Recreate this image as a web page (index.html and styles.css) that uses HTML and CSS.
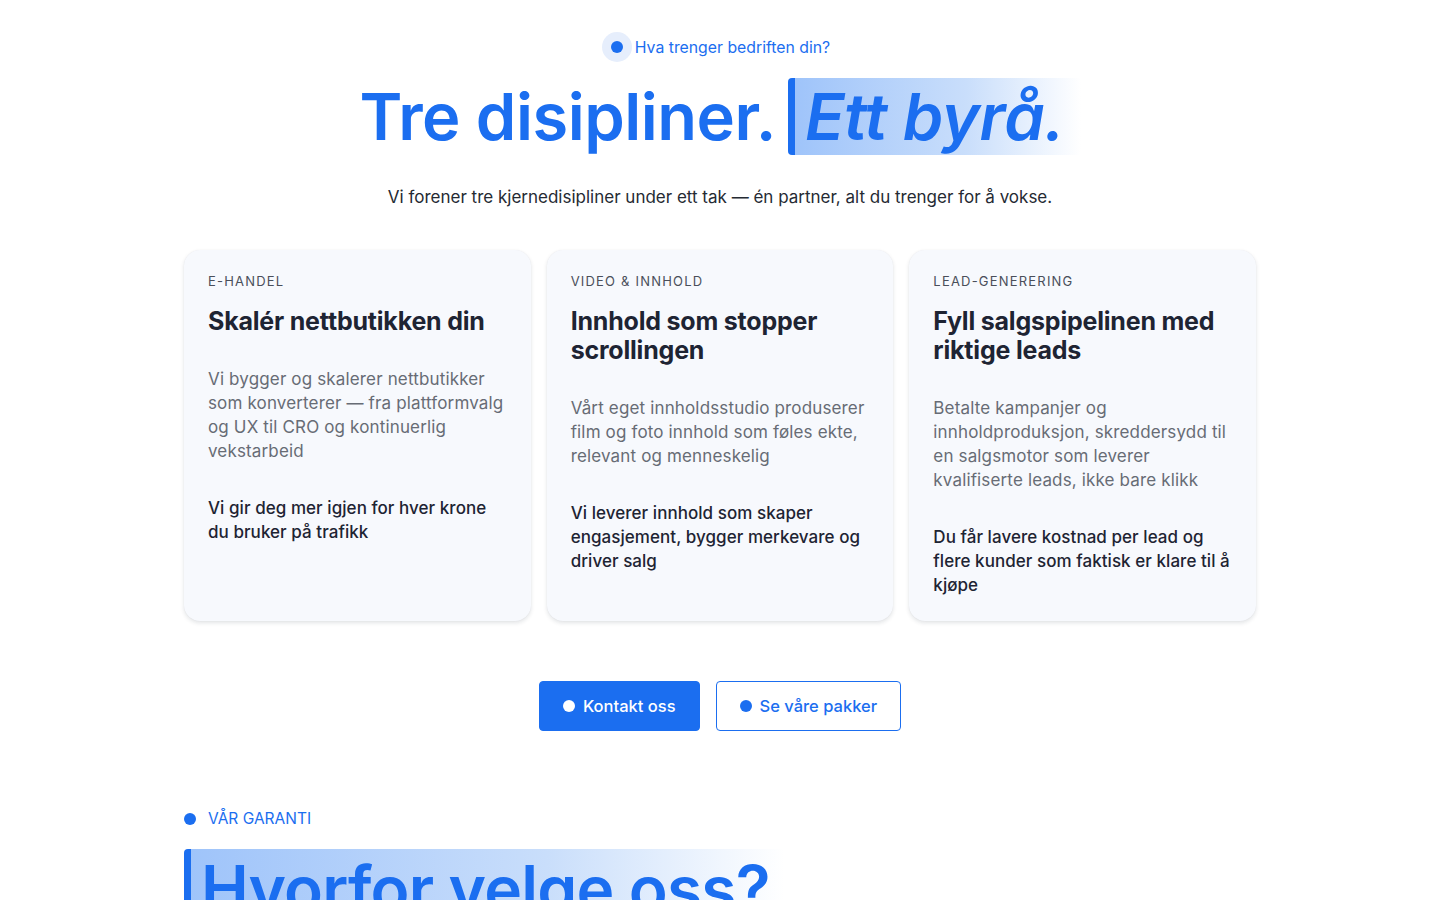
FILE: index.html
```html
<!DOCTYPE html>
<html lang="no">
<head>
<meta charset="utf-8">
<title>Tre disipliner. Ett byrå.</title>
<link rel="stylesheet" href="styles.css">
</head>
<body>
<main class="page">
  <section class="hero">
    <div class="eyebrow"><span class="halo"><span class="dot"></span></span><span class="eyebrow-text">Hva trenger bedriften din?</span></div>
    <h1 class="title">Tre disipliner. <span class="mark"><em>Ett byrå.</em></span></h1>
    <p class="lead">Vi forener tre kjernedisipliner under ett tak — én partner, alt du trenger for å vokse.</p>
    <div class="cards">
      <article class="card">
        <div class="card-label">E-HANDEL</div>
        <h2 class="card-title">Skalér nettbutikken din</h2>
        <p class="card-desc">Vi bygger og skalerer nettbutikker som konverterer — fra plattformvalg og UX til CRO og kontinuerlig vekstarbeid</p>
        <p class="card-strong">Vi gir deg mer igjen for hver krone du bruker på trafikk</p>
      </article>
      <article class="card">
        <div class="card-label">VIDEO &amp; INNHOLD</div>
        <h2 class="card-title">Innhold som stopper scrollingen</h2>
        <p class="card-desc">Vårt eget innholdsstudio produserer film og foto innhold som føles ekte, relevant og menneskelig</p>
        <p class="card-strong">Vi leverer innhold som skaper engasjement, bygger merkevare og driver salg</p>
      </article>
      <article class="card">
        <div class="card-label">LEAD-GENERERING</div>
        <h2 class="card-title">Fyll salgspipelinen med riktige leads</h2>
        <p class="card-desc">Betalte kampanjer og innholdproduksjon, skreddersydd til en salgsmotor som leverer kvalifiserte leads, ikke bare klikk</p>
        <p class="card-strong">Du får lavere kostnad per lead og flere kunder som faktisk er klare til å kjøpe</p>
      </article>
    </div>
    <div class="actions">
      <a class="btn btn-primary" href="#"><span class="btn-dot"></span>Kontakt oss</a>
      <a class="btn btn-outline" href="#"><span class="btn-dot"></span>Se våre pakker</a>
    </div>
  </section>
  <section class="guarantee">
    <div class="g-eyebrow"><span class="g-dot"></span>VÅR GARANTI</div>
    <h2 class="g-title"><span class="g-mark">Hvorfor velge oss?</span></h2>
  </section>
</main>
</body>
</html>
```
FILE: styles.css
```css
* { box-sizing: border-box; }
html, body { margin: 0; padding: 0; background: #ffffff; }
body {
  font-family: Inter, "Noto Sans", sans-serif;
  color: #1e2433;
  height: 900px;
  overflow: hidden;
}
.page { width: 1072px; margin: 0 auto; }
.hero { display: flex; flex-direction: column; align-items: center; padding-top: 32px; }
.eyebrow { display: flex; align-items: center; gap: 3px; height: 30px; margin-right: 8px; }
.halo {
  width: 30px; height: 30px; border-radius: 50%;
  background: #e6eefc;
  display: flex; align-items: center; justify-content: center;
}
.dot { width: 12px; height: 12px; border-radius: 50%; background: #1b6ef0; }
.eyebrow-text { font-size: 15.8px; color: #1b6ef0; letter-spacing: 0; }
.title {
  margin: 16px 0 0;
  font-size: 65px; font-weight: 600; line-height: 77px;
  color: #1b6ef0; letter-spacing: -0.5px;
  display: flex; align-items: center; gap: 12px;
}
.mark {
  display: inline-block;
  border-left: 7px solid #1b6ef0;
  border-radius: 4px;
  background: linear-gradient(90deg, #9fc4fa 0%, #c9defb 60%, rgba(255,255,255,0) 100%);
  padding: 0 16px 0 10px;
}
.mark em { font-style: italic; }
.lead { margin: 30px 0 0; font-size: 17px; color: #252a33; line-height: 24px; }
.cards {
  margin-top: 41px;
  width: 100%;
  display: grid; grid-template-columns: repeat(3, 1fr); gap: 16px;
}
.card {
  background: #f7f9fd;
  border-radius: 16px;
  padding: 23px 24px 24px;
  min-height: 371px;
  box-shadow: 0 2px 4px rgba(20, 30, 50, 0.12), 0 0 1px rgba(20,30,50,0.08);
}
.card-label { font-size: 13px; letter-spacing: 1.2px; color: #4a4f5a; line-height: 16px; }
.card-title { margin: 18px 0 0; font-size: 25px; font-weight: 700; line-height: 29px; color: #1e2433; letter-spacing: -0.2px; }
.card-desc { margin: 31px 0 0; font-size: 17px; line-height: 24px; color: #676c75; letter-spacing: 0.15px; }
.card-strong { margin: 33px 0 0; font-size: 17px; line-height: 24px; color: #1e2433; font-weight: 500; letter-spacing: 0.05px; }
.actions { display: flex; gap: 16px; margin-top: 60px; }
.btn {
  display: flex; align-items: center; gap: 8px;
  height: 50px; padding: 0 23px;
  border-radius: 4px; font-size: 16.5px; font-weight: 500; text-decoration: none;
}
.btn-dot { width: 12px; height: 12px; border-radius: 50%; }
.btn-primary { background: #1b6ef0; color: #ffffff; border: 1px solid #1b6ef0; }
.btn-primary .btn-dot { background: #ffffff; }
.btn-outline { background: #ffffff; color: #1b6ef0; border: 1px solid #1b6ef0; }
.btn-outline .btn-dot { background: #1b6ef0; }
.guarantee { margin-top: 78px; }
.g-eyebrow { display: flex; align-items: center; gap: 12px; font-size: 15.5px; color: #1b6ef0; line-height: 20px; }
.g-dot { width: 12px; height: 12px; border-radius: 50%; background: #1b6ef0; }
.g-title { margin: 20px 0 0; font-size: 64px; font-weight: 600; line-height: 80px; color: #1b6ef0; letter-spacing: -0.8px; }
.g-mark {
  display: inline-block;
  border-left: 7px solid #1b6ef0;
  border-radius: 4px;
  background: linear-gradient(90deg, #9fc4fa 0%, #c9defb 60%, rgba(255,255,255,0) 100%);
  padding: 0 14px 0 10px;
}
```
